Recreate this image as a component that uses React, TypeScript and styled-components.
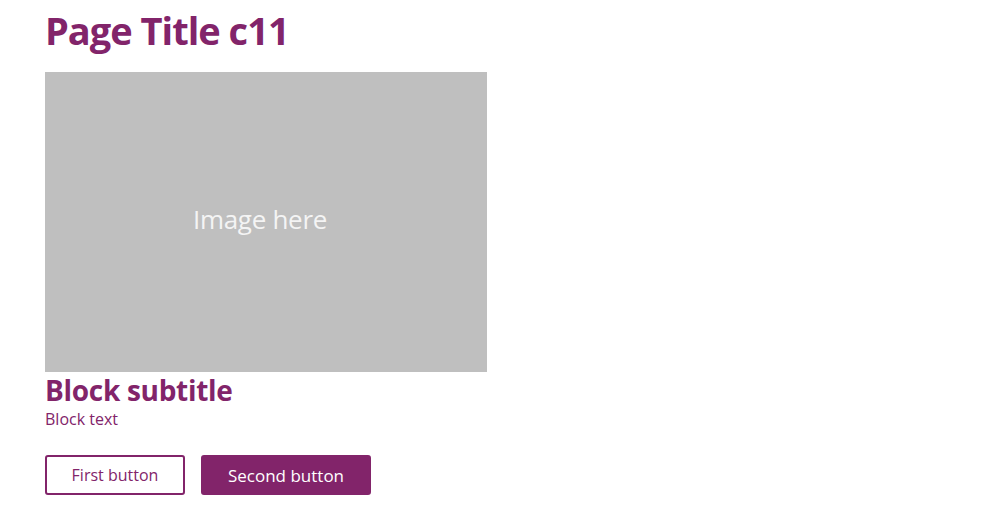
import React from "react";
import styled, { createGlobalStyle } from "styled-components";

const Global = createGlobalStyle`
  html, body { margin: 0; padding: 0; background: #ffffff; }
  body { font-family: "Open Sans", "Noto Sans", sans-serif; }
`;

const Page = styled.main`
  padding: 0 45px;
  display: flex;
  flex-direction: column;
  align-items: flex-start;
`;

const Title = styled.h1`
  margin: 6px 0 0;
  font-size: 38px;
  line-height: 48px;
  font-weight: 700;
  color: #82246a;
  letter-spacing: -1px;
`;

const ImageBox = styled.div`
  margin-top: 18px;
  width: 442px;
  height: 300px;
  box-sizing: border-box;
  padding: 0 12px 6px 0;
  background: #bfbfbf;
  display: flex;
  align-items: center;
  justify-content: center;
  color: #f4f4f4;
  font-family: "Open Sans", sans-serif;
  font-size: 26px;
  letter-spacing: -0.3px;
`;

const Subtitle = styled.h2`
  margin: 0;
  font-size: 28px;
  line-height: 36px;
  font-weight: 700;
  color: #82246a;
  letter-spacing: -0.3px;
`;

const Text = styled.p`
  margin: 0;
  font-size: 16px;
  line-height: 22px;
  color: #82246a;
`;

const Actions = styled.div`
  margin-top: 25px;
  display: flex;
  gap: 16px;
`;

const Button = styled.button<{ $primary?: boolean }>`
  height: 40px;
  width: ${(p) => (p.$primary ? "170px" : "140px")};
  border: 2px solid #82246a;
  border-radius: 3px;
  background: ${(p) => (p.$primary ? "#82246a" : "#ffffff")};
  color: ${(p) => (p.$primary ? "#ffffff" : "#82246a")};
  font-family: "Open Sans", sans-serif;
  font-size: ${(p) => (p.$primary ? "17px" : "16px")};
  font-weight: ${(p) => (p.$primary ? 500 : 400)};
  cursor: pointer;
  padding: 0;
`;

export default function App() {
  return (
    <>
      <Global />
      <Page>
        <Title>Page Title c11</Title>
        <ImageBox>Image here</ImageBox>
        <Subtitle>Block subtitle</Subtitle>
        <Text>Block text</Text>
        <Actions>
          <Button>First button</Button>
          <Button $primary>Second button</Button>
        </Actions>
      </Page>
    </>
  );
}
